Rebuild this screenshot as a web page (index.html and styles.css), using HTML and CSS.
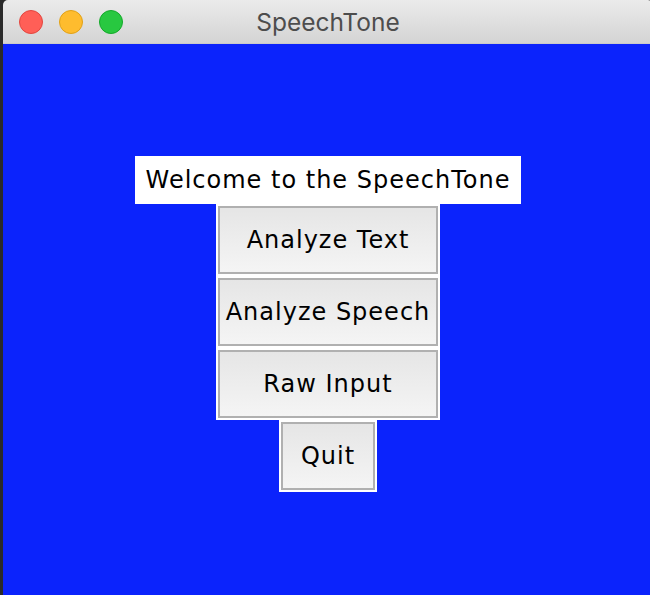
FILE: index.html
```html
<!DOCTYPE html>
<html lang="en">
<head>
<meta charset="utf-8">
<title>SpeechTone</title>
<link rel="stylesheet" href="styles.css">
</head>
<body>
<div class="window">
  <div class="titlebar">
    <div class="lights">
      <span class="light red"></span>
      <span class="light yellow"></span>
      <span class="light green"></span>
    </div>
    <div class="title">SpeechTone</div>
    <div></div>
  </div>
  <div class="content">
    <div class="label">Welcome to the SpeechTone</div>
    <button class="btn">Analyze Text</button>
    <button class="btn">Analyze Speech</button>
    <button class="btn">Raw Input</button>
    <button class="btn quit">Quit</button>
  </div>
</div>
</body>
</html>
```

FILE: styles.css
```css
html, body {
  margin: 0;
  padding: 0;
  height: 100%;
}
body {
  background: #2a2a2a;
  overflow: hidden;
  font-family: "DejaVu Sans", "Liberation Sans", sans-serif;
}
.window {
  margin-left: 3px;
  width: 650px;
  height: 595px;
  border-radius: 5px 5px 0 0;
  overflow: hidden;
  display: flex;
  flex-direction: column;
}
.titlebar {
  height: 43px;
  border-bottom: 1px solid #cbcbcb;
  background: linear-gradient(#ebebeb, #d4d4d4);
  display: grid;
  grid-template-columns: 1fr auto 1fr;
  align-items: center;
}
.lights {
  display: flex;
  gap: 16px;
  padding-left: 16px;
}
.light {
  width: 24px;
  height: 24px;
  border-radius: 50%;
  box-sizing: border-box;
}
.red { background: #ff5f57; border: 1px solid #e2463f; }
.yellow { background: #febc2e; border: 1px solid #e1a116; }
.green { background: #28c840; border: 1px solid #14a92a; }
.title {
  font-family: Inter, "Noto Sans", sans-serif;
  font-size: 24.5px;
  color: #4d4d4d;
  padding-top: 1px;
}
.content {
  flex: 1;
  background: #0b23fc;
  display: flex;
  flex-direction: column;
  align-items: center;
  padding-top: 112px;
}
.label {
  width: 386px;
  height: 48px;
  background: #fff;
  display: flex;
  align-items: center;
  justify-content: center;
  font-size: 24px;
  letter-spacing: 1px;
  color: #000;
}
.btn {
  box-sizing: border-box;
  width: 224px;
  height: 72px;
  margin: 0;
  padding: 0;
  border: 2px solid #fff;
  box-shadow: inset 0 0 0 2px #b0b0b0;
  background: linear-gradient(#e5e5e5, #f5f5f5);
  font-family: "DejaVu Sans", "Liberation Sans", sans-serif;
  font-size: 24px;
  letter-spacing: 1px;
  color: #000;
}
.btn.quit {
  width: 98px;
}
```
